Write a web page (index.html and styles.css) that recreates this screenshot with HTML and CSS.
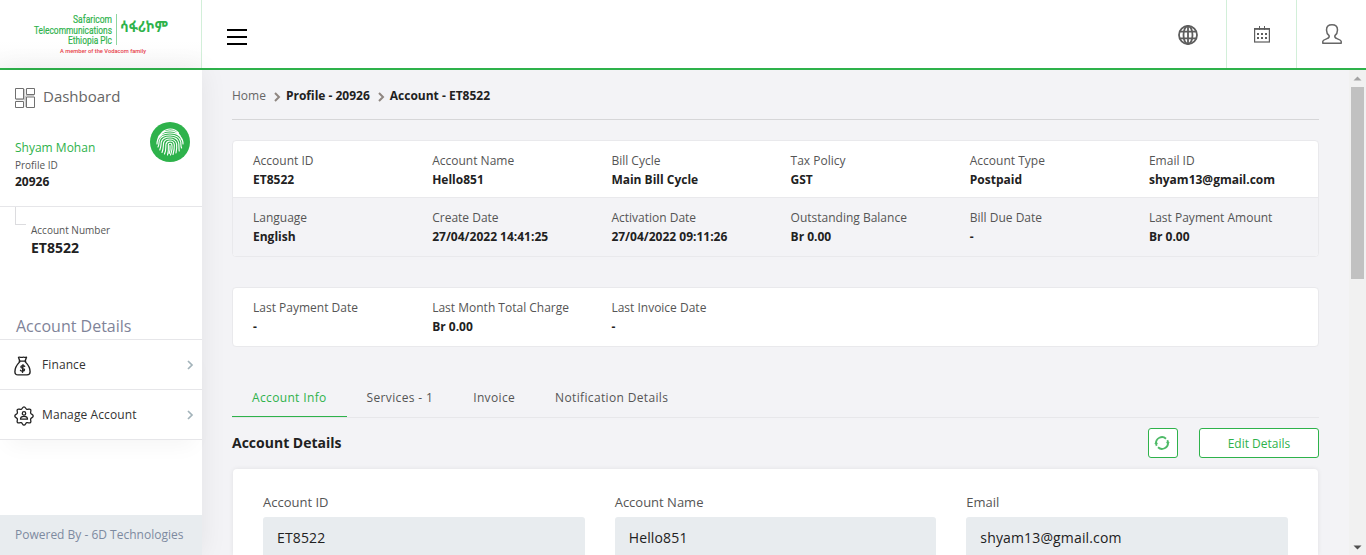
FILE: index.html
```html
<!DOCTYPE html>
<html lang="en">
<head>
<meta charset="utf-8">
<title>Account - ET8522</title>
<link rel="stylesheet" href="styles.css">
</head>
<body>
<header class="topbar">
  <div class="brand">
    <div class="brand-top">
      <svg width="79" height="33" viewBox="0 0 79 33" role="img" aria-label="Safaricom Telecommunications Ethiopia Plc">
        <g class="brand-name">
          <text x="39" y="9" textLength="39" lengthAdjust="spacingAndGlyphs">Safaricom</text>
          <text x="0" y="19.500" textLength="78" lengthAdjust="spacingAndGlyphs">Telecommunications</text>
          <text x="34" y="30" textLength="44" lengthAdjust="spacingAndGlyphs">Ethiopia Plc</text>
        </g>
      </svg>
      <i class="brand-line"></i>
      <svg width="50" height="33" viewBox="0 0 50 33">
        <text class="brand-amharic" x="0" y="18" textLength="48" lengthAdjust="spacingAndGlyphs">ሳፋሪኮም</text>
      </svg>
    </div>
    <svg class="brand-bottom" width="88" height="8" viewBox="0 0 88 8">
      <text class="brand-tag" x="0" y="6" textLength="86" lengthAdjust="spacingAndGlyphs">A member of the Vodacom family</text>
    </svg>
  </div>
  <button class="menu" aria-label="Menu"><span></span><span></span><span></span></button>
  <div class="tools">
    <div class="tool tool-globe">
      <svg width="20" height="20" viewBox="0 0 20 20" fill="none" stroke="#5d5d5d" stroke-width="1.800"><circle cx="10" cy="10" r="9"/><ellipse cx="10" cy="10" rx="4.500" ry="9"/><path d="M10 1v18M1.500 6.700h17M1.500 13.300h17"/></svg>
    </div>
    <div class="tool">
      <svg class="calendar" width="16" height="17" viewBox="0 0 16 17" fill="none" stroke="#5d5d5d"><rect x=".6" y="2.600" width="14.800" height="13.400" stroke-width="1.200"/><path d="M0 3.200h16" stroke-width="1.200"/><path d="M5.500 0v4M10.500 0v4"/><path d="M3 8h10M3 12h10" stroke-width="2" stroke-dasharray="2 2"/></svg>
    </div>
    <div class="tool">
      <svg width="20" height="20" viewBox="0 0 20 20" fill="none" stroke="#666" stroke-width="1.500" stroke-linejoin="round"><path d="M10 .8C6.600.8 4.500 2.800 4.500 6c0 2.600.9 4.300 2.600 5.700.5 1.600-.4 2.300-2.100 2.900C2.300 15.600.8 16.200.8 17.500v1.700h18.400v-1.700c0-1.300-1.500-1.900-4.200-2.900-1.700-.6-2.600-1.300-2.100-2.900 1.700-1.400 2.600-3.100 2.600-5.700 0-3.200-2.100-5.200-5.500-5.200z"/></svg>
    </div>
  </div>
</header>
<div class="body">
  <aside class="sidebar">
    <a class="dash">
      <svg width="20" height="20" viewBox="0 0 20 20" fill="none"><path d="M9.500 1v11M10.500 8v11M1 11.500h9M11 7.500h8" stroke="#c9c9c9" stroke-width="1.600"/><path d="M.5.500h8v10.500h-8zM11.500.500h8v6h-8zM.5 13.500h8v6h-8zM11.500 9h8v10.500h-8z" stroke="#707070"/></svg>
      <span>Dashboard</span>
    </a>
    <section class="profile">
      <div>
        <div class="profile-name">Shyam Mohan</div>
        <div class="small">Profile ID</div>
        <div class="profile-id">20926</div>
      </div>
      <div class="finger">
        <svg width="28" height="28" viewBox="0 0 28 28" fill="none" stroke="#fff" stroke-width="1.150" stroke-linecap="round"><path d="M6 4.500C11-.3 18-.2 22.500 4.800M3.500 8C8 1.500 19 .5 24.300 8M1.500 12C3 5 9 3 14 3s10 3 12 9M1 16c0-6 4-11 13-11s13 5 13 11M2 19c1-2 1-3 1.200-6C4 9 8 7 14 7s10 3 10.800 7c.2 3-.1 5 .8 6M3.800 22c1.500-4 1-5 1.500-8C6 11 9 9 14 9s8 2.500 8.700 6c.4 3 .1 5 .5 8M6 24.500c1.800-4 1-7 1.700-10C8.500 12 11 11 14 11s6 2 6.600 5c.4 3 0 6-.6 9M8.500 26c2-4 1-7 1.500-10 .5-2 2-3 4-3s4 1 4.300 4c.2 4-.3 6-1.300 9.500M11.500 27c1.800-5 .3-9 1-11 .6-1 2.700-1 3.200 0 1 4-.1 8-1.200 11M14 17.500c.3 3.500-.1 6-.8 8"/></svg>
      </div>
    </section>
    <section class="account">
      <i class="branch"></i>
      <div>
        <div class="small">Account Number</div>
        <div class="account-no">ET8522</div>
      </div>
    </section>
    <h2 class="side-title">Account Details</h2>
    <nav class="side-nav">
      <a class="side-link">
        <svg width="17" height="20" viewBox="0 0 17 22" preserveAspectRatio="none" fill="none" stroke="#222" stroke-width="1.400" stroke-linejoin="round" stroke-linecap="round"><path d="M5.700 5.200 4.500 1.500c1.500-.8 2.400.5 4 0 1.600-.5 2.500.3 4-.2L11.200 5.200M5.200 5.700h6.500M5.700 6.500C3 9.500.9 13 .9 17.200.9 19.500 2 20.700 4 20.700h9c2 0 3.100-1.200 3.100-3.500 0-4.200-2.100-7.700-4.800-10.700"/><path d="M10.700 11.300c-.6-.9-3.600-1.200-3.800.7-.2 2 3.600 1.100 3.600 3.100 0 1.900-3.200 1.800-4 .6M9 9.500l-.5 8.500"/></svg>
        <span>Finance</span>
        <svg class="chev" width="6" height="10" viewBox="0 0 6 10"><path d="M1 1l4 4-4 4"/></svg>
      </a>
      <a class="side-link">
        <svg width="20" height="20" viewBox="0 0 20 20" fill="none" stroke="#222" stroke-width="1.300" stroke-linejoin="round"><path d="M7.200 3.300C8.700 2.700 8.300.8 10 .8s1.300 1.900 2.800 2.500c1.500.6 2.500-1 3.700.2s-.4 2.200.2 3.700c.6 1.500 2.500 1.100 2.500 2.800s-1.900 1.300-2.500 2.800c-.6 1.500 1 2.500-.2 3.700s-2.200-.4-3.700.2c-1.500.6-1.100 2.500-2.800 2.500s-1.300-1.900-2.800-2.500c-1.500-.6-2.500 1-3.700-.2s.4-2.200-.2-3.700C2.700 11.300.8 11.700.8 10s1.900-1.300 2.500-2.800c.6-1.500-1-2.500.2-3.700s2.200.4 3.700-.2z"/><circle cx="10" cy="7.400" r="1.700"/><path d="M6.500 13.200c0-1.900 1.500-2.800 3.500-2.800s3.500.9 3.500 2.800z"/></svg>
        <span>Manage Account</span>
        <svg class="chev" width="6" height="10" viewBox="0 0 6 10"><path d="M1 1l4 4-4 4"/></svg>
      </a>
    </nav>
    <footer class="powered">Powered By - 6D Technologies</footer>
  </aside>
  <main class="main">
    <nav class="crumbs">
      <a>Home</a>
      <svg width="6" height="10" viewBox="0 0 6 10"><path d="M1 1l4 4-4 4"/></svg>
      <b>Profile - 20926</b>
      <svg width="6" height="10" viewBox="0 0 6 10"><path d="M1 1l4 4-4 4"/></svg>
      <b>Account - ET8522</b>
    </nav>
    <section class="card summary">
      <dl class="row">
        <div><dt>Account ID</dt><dd>ET8522</dd></div>
        <div><dt>Account Name</dt><dd>Hello851</dd></div>
        <div><dt>Bill Cycle</dt><dd>Main Bill Cycle</dd></div>
        <div><dt>Tax Policy</dt><dd>GST</dd></div>
        <div><dt>Account Type</dt><dd>Postpaid</dd></div>
        <div><dt>Email ID</dt><dd>shyam13@gmail.com</dd></div>
      </dl>
      <dl class="row row-alt">
        <div><dt>Language</dt><dd>English</dd></div>
        <div><dt>Create Date</dt><dd>27/04/2022 14:41:25</dd></div>
        <div><dt>Activation Date</dt><dd>27/04/2022 09:11:26</dd></div>
        <div><dt>Outstanding Balance</dt><dd>Br 0.00</dd></div>
        <div><dt>Bill Due Date</dt><dd>-</dd></div>
        <div><dt>Last Payment Amount</dt><dd>Br 0.00</dd></div>
      </dl>
    </section>
    <section class="card">
      <dl class="row row-last">
        <div><dt>Last Payment Date</dt><dd>-</dd></div>
        <div><dt>Last Month Total Charge</dt><dd>Br 0.00</dd></div>
        <div><dt>Last Invoice Date</dt><dd>-</dd></div>
      </dl>
    </section>
    <nav class="tabs">
      <a class="tab active">Account Info</a>
      <a class="tab">Services - 1</a>
      <a class="tab">Invoice</a>
      <a class="tab">Notification Details</a>
    </nav>
    <div class="section-head">
      <h3>Account Details</h3>
      <button class="btn btn-icon" aria-label="Refresh">
        <svg width="16" height="14" viewBox="0 0 16 14" fill="none" stroke="#4fba68" stroke-width="1.900"><path d="M2 7.500A6 6 0 0 1 12 2.700M14 6.500A6 6 0 0 1 4 11.300M14 7A6 6 0 0 0 13.300 4.300M2 7A6 6 0 0 0 2.700 9.700"/><path d="M11.800 6.300h4L13.800 8.600zM.2 7.700h4L2.200 5.400z" fill="#4fba68" stroke="none"/></svg>
      </button>
      <button class="btn btn-edit">Edit Details</button>
    </div>
    <form class="details">
      <div class="field"><div class="field-label">Account ID</div><div class="field-value">ET8522</div></div>
      <div class="field"><div class="field-label">Account Name</div><div class="field-value">Hello851</div></div>
      <div class="field"><div class="field-label">Email</div><div class="field-value">shyam13@gmail.com</div></div>
    </form>
  </main>
  <div class="scrollbar">
    <svg width="9" height="5" viewBox="0 0 9 5"><path d="M.5 4.500h8L4.500.5z" fill="#a3a3a3"/></svg>
    <i class="thumb"></i>
    <svg class="down" width="9" height="5" viewBox="0 0 9 5"><path d="M.5.500h8L4.500 4.500z" fill="#505050"/></svg>
  </div>
</div>
</body>
</html>
```
FILE: styles.css
```css
* { box-sizing: border-box; }
body {
  margin: 0;
  height: 555px;
  overflow: hidden;
  display: flex;
  flex-direction: column;
  font-family: "Open Sans", "Noto Sans", sans-serif;
  font-size: 12px;
  color: #212121;
  background: #f3f3f6;
}
h2, h3, dl, dd { margin: 0; }
svg { display: block; flex: none; overflow: visible; }
button { padding: 0; font: inherit; }

.topbar {
  flex: none;
  display: flex;
  height: 70px;
  background: #fff;
  border-bottom: 2px solid #2eb24b;
}
.brand {
  width: 202px;
  padding: 14px 0 0 34px;
  border-right: 1px solid #d2efd9;
  background: linear-gradient(#fff 60%, #fafafa);
}
.brand-top { display: flex; }
.brand-line { width: 1px; height: 31px; margin: 0 3px 0 3px; background: #8fd6a0; }
.brand-bottom { margin-left: 26px; }
.brand-name { font: 11px Roboto, sans-serif; fill: #2eb24b; stroke: #2eb24b; stroke-width: .2; }
.brand-amharic { font: bold 15px "Noto Sans Ethiopic", "Abyssinica SIL", "Noto Sans", sans-serif; fill: #2eb24b; }
.brand-tag { font: 500 5.500px Roboto, sans-serif; fill: #e8434c; }
.menu {
  display: flex;
  flex-direction: column;
  gap: 5px;
  width: 20px;
  margin: 29px 0 0 25px;
  border: 0;
  background: none;
  height: 16px;
}
.menu span { height: 2px; background: #000; }
.tools { display: flex; margin-left: auto; }
.tool {
  display: flex;
  align-items: center;
  justify-content: center;
  width: 70px;
  border-left: 1px solid #d2efd9;
}
.tool-globe { width: 76px; border-left: 0; padding-top: 2px; }
.calendar { margin-top: 1px; }

.body { flex: 1; display: flex; min-height: 0; }
.sidebar {
  width: 202px;
  flex: none;
  display: flex;
  flex-direction: column;
  background: #fff;
  box-shadow: 0 0 26px rgba(0, 0, 0, .07);
}
.dash {
  display: flex;
  align-items: center;
  gap: 8px;
  height: 54px;
  padding-left: 15px;
  font-size: 15px;
  color: #666;
}
.dash span { margin-top: -2px; }
.dash svg { margin-top: 1px; }
.profile {
  display: flex;
  justify-content: space-between;
  height: 83px;
  padding: 14px 12px 0 15px;
  border-bottom: 1px solid #e6e6e9;
}
.profile-name { font-size: 12px; line-height: 19px; color: #2eb24b; }
.small { font-size: 10px; line-height: 16px; color: #555; }
.profile-id { font-size: 12px; line-height: 17px; font-weight: bold; }
.finger {
  display: flex;
  align-items: center;
  justify-content: center;
  width: 40px;
  height: 40px;
  margin-top: -16px;
  border-radius: 50%;
  background: #2eb24b;
}
.account { display: flex; gap: 5px; height: 100px; padding-left: 15px; }
.account > div { padding-top: 15px; }
.branch { width: 11px; height: 18px; border: solid #dcdcdf; border-width: 0 0 1px 1px; }
.account-no { font-size: 14px; line-height: 20px; font-weight: bold; }
.side-title {
  height: 32px;
  padding-left: 16px;
  font-size: 16px;
  font-weight: normal;
  line-height: 38px;
  color: #7f8499;
}
.side-nav { border-top: 1px solid #e6e6e9; box-shadow: 0 14px 20px -8px rgba(0, 0, 0, .04); }
.side-link {
  display: grid;
  grid-template-columns: 20px 1fr 6px;
  column-gap: 8px;
  align-items: center;
  height: 50px;
  padding: 0 9px 0 14px;
  border-bottom: 1px solid #e6e6e9;
  color: #333;
  letter-spacing: .1px;
}
.side-link > svg:first-child { margin-top: 3px; }
.chev { fill: none; stroke: #a3b3ba; stroke-width: 1.700; }
.powered {
  margin-top: auto;
  height: 40px;
  padding-left: 15px;
  line-height: 40px;
  background: #e8ecef;
  color: #7d8aa0;
}

.main { flex: 1; padding: 0 30px; min-width: 0; }
.crumbs {
  display: flex;
  align-items: center;
  gap: 8px;
  height: 50px;
  padding-top: 3px;
  border-bottom: 1px solid #d6d6d8;
  line-height: 18px;
  color: #666;
}
.crumbs svg { fill: none; stroke: #8f8681; stroke-width: 2; margin-top: 1px; }
.crumbs b { margin-left: -2px; color: #212121; }
.card {
  margin-top: 30px;
  background: #fff;
  border: 1px solid #e9e9ec;
  border-radius: 4px;
  overflow: hidden;
}
.summary { margin-top: 20px; }
.row {
  display: grid;
  grid-template-columns: repeat(6, 179.200px);
  padding-left: 20px;
  height: 56px;
  padding-top: 10px;
  line-height: 19px;
}
.row-alt { height: 59px; border-top: 1px solid #e9e9ec; background: #f3f3f6; }
.row-last { height: 58px; }
dt { color: #555; }
dd { font-weight: bold; }
.tabs { display: flex; height: 40px; margin-top: 31px; border-bottom: 1px solid #e7e7ea; }
.tab {
  height: 39px;
  padding: 0 20px;
  line-height: 40px;
  letter-spacing: .35px;
  color: #555;
}
.active { color: #2eb24b; border-bottom: 1px solid #2eb24b; }
.section-head { display: flex; align-items: center; height: 30px; margin-top: 10px; }
.section-head h3 { font-size: 14px; line-height: 30px; }
.btn {
  display: flex;
  align-items: center;
  justify-content: center;
  height: 30px;
  border: 1px solid #2eb24b;
  border-radius: 3px;
  background: #fff;
  color: #2eb24b;
}
.btn-icon { width: 30px; margin-left: auto; padding-right: 2px; }
.btn-edit { width: 120px; margin-left: 21px; }
.details {
  display: grid;
  grid-template-columns: repeat(3, 1fr);
  gap: 30px;
  margin: 11px 1px 0;
  padding: 23px 30px 0;
  height: 86px;
  background: #fff;
  border-radius: 4px 4px 0 0;
  box-shadow: 0 0 5px rgba(0, 0, 0, .08);
}
.field-label { font-size: 13px; line-height: 20px; height: 25px; color: #555; }
.field-value {
  height: 38px;
  padding-left: 14px;
  border-radius: 3px 3px 0 0;
  font-size: 14px;
  letter-spacing: .15px;
  line-height: 42px;
  background: #e8ecef;
}
.scrollbar {
  display: flex;
  flex-direction: column;
  align-items: center;
  width: 17px;
  padding: 6px 0 5px;
  background: #f1f1f1;
}
.thumb { width: 13px; height: 192px; margin-top: 6px; background: #c1c1c1; }
.down { margin-top: auto; }
```
